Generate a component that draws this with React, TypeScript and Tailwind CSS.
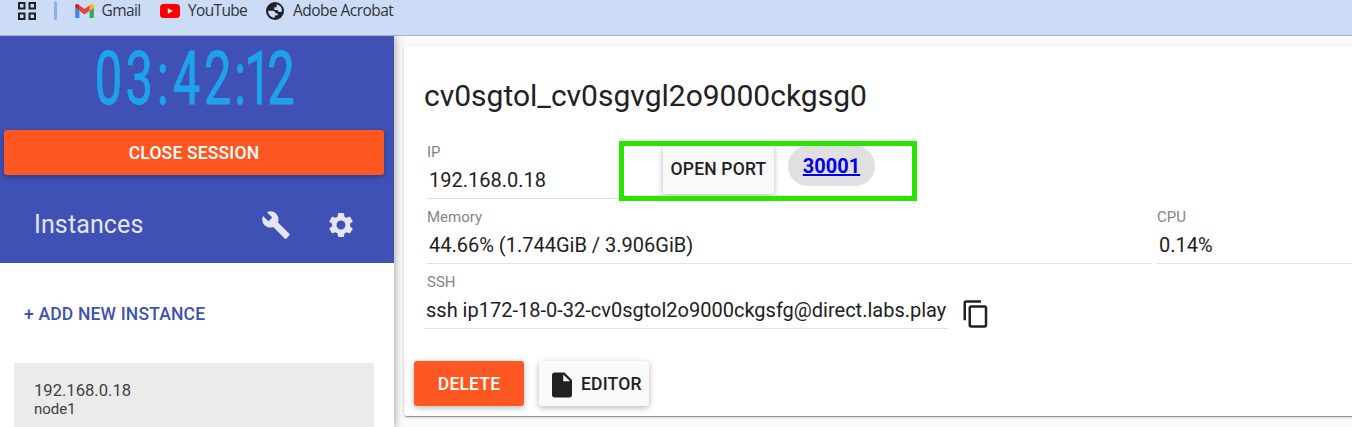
import React from "react";
import { MdBuild, MdContentCopy, MdInsertDriveFile, MdSettings } from "react-icons/md";

const RAISED = "shadow-[0_2px_6px_rgba(0,0,0,0.28)]";

function AppsIcon() {
  return (
    <svg width="18" height="18" viewBox="0 0 18 18" fill="none" stroke="#202124" strokeWidth="2">
      <rect x="1" y="1" width="5.5" height="5.5" />
      <rect x="11.5" y="1" width="5.5" height="5.5" />
      <rect x="1" y="11.5" width="5.5" height="5.5" />
      <rect x="11.5" y="11.5" width="5.5" height="5.5" />
    </svg>
  );
}

function GmailIcon() {
  return (
    <svg width="19" height="14" viewBox="52 42 88 66">
      <path fill="#4285f4" d="M58 108h14V74L52 59v43c0 3.32 2.69 6 6 6" />
      <path fill="#34a853" d="M120 108h14c3.32 0 6-2.69 6-6V59l-20 15" />
      <path fill="#fbbc04" d="M120 48v26l20-15v-8c0-7.42-8.47-11.65-14.4-7.2" />
      <path fill="#ea4335" d="M72 74V48l24 18 24-18v26L96 92" />
      <path fill="#c5221f" d="M52 51v8l20 15V48l-5.6-4.2c-5.94-4.45-14.4-.22-14.4 7.2" />
    </svg>
  );
}

function YouTubeIcon() {
  return (
    <svg width="20" height="14" viewBox="0 0 20 14">
      <rect width="20" height="14" rx="3.5" fill="#ff0000" />
      <path d="M7.8 4.2v5.6l5-2.8z" fill="#fff" />
    </svg>
  );
}

function GlobeIcon() {
  return (
    <svg width="18" height="18" viewBox="0 0 18 18">
      <circle cx="9" cy="9" r="9" fill="#202124" />
      <path
        fill="#ccdcf6"
        d="M2 8.7h4.6c1.7 0 3 1 3 2.6h2v2.2H8.8v2.3A7 7 0 0 1 2 8.7zM10.6 2.2A7 7 0 0 1 16 9c-.5.8-1.3 1-2.2 1-1.3 0-2-.8-2-2H8.3V5.2h2.3z"
      />
    </svg>
  );
}

function Bookmarks() {
  return (
    <header className="flex h-9 shrink-0 items-start border-b border-[#a3b2cf] bg-[#ccdcf6] font-['Open_Sans','Noto_Sans',sans-serif] text-[15.5px] leading-[20px] text-[#30343b]">
      <div className="ml-[17.5px] mt-[2px]"><AppsIcon /></div>
      <div className="ml-[18px] mt-[1px] h-[19px] w-[3px] rounded-full bg-[#8ab2ee]" />
      <div className="ml-[18px] mt-[4px]"><GmailIcon /></div>
      <span className="ml-[8px] w-[40px] whitespace-nowrap tracking-[-0.6px]">Gmail</span>
      <div className="ml-[18.5px] mt-[4px]"><YouTubeIcon /></div>
      <span className="ml-[8px] w-[58px] whitespace-nowrap tracking-[-0.65px]">YouTube</span>
      <div className="ml-[20px] mt-[2px]"><GlobeIcon /></div>
      <span className="ml-[9px] whitespace-nowrap tracking-[-0.55px]">Adobe Acrobat</span>
    </header>
  );
}

function Digit({ char, className }: { char: string; className: string }) {
  return <span className={`shrink-0 text-center ${className}`}>{char}</span>;
}

function Clock() {
  return (
    <div className="h-[94px] pl-[93px] pt-[6px]">
      <div className="flex w-[310px] origin-left scale-x-[0.66] font-['Roboto',sans-serif] text-[74px] leading-[74px] text-[#1fa2ec] [-webkit-text-stroke:1px_#1fa2ec]">
        <Digit char="0" className="w-[47px]" />
        <Digit char="3" className="w-[46px]" />
        <Digit char=":" className="w-[25px]" />
        <Digit char="4" className="w-[47px]" />
        <Digit char="2" className="w-[48px]" />
        <Digit char=":" className="w-[20px]" />
        <Digit char="1" className="-ml-[4px] w-[42px]" />
        <Digit char="2" className="-ml-[7px] w-[42px]" />
      </div>
    </div>
  );
}

function Sidebar() {
  return (
    <aside className="z-10 flex w-[394px] shrink-0 flex-col bg-white shadow-[1px_0_8px_rgba(0,0,0,0.35)]">
      <div className="flex h-[227px] shrink-0 flex-col bg-[#3f51b5]">
        <Clock />
        <button className={`ml-1 flex h-[45px] w-[380px] shrink-0 items-center justify-center rounded-[3px] bg-[#ff5722] pt-[2px] text-[17.5px] font-medium tracking-[0.175px] text-white ${RAISED}`}>
          CLOSE SESSION
        </button>
        <div className="flex pt-[34px] text-[#e4e6f5]">
          <h2 className="ml-[34px] w-[227px] pt-px text-[25px] leading-[30px] tracking-[0.125px]">Instances</h2>
          <MdBuild size={30} className="mt-px" />
          <MdSettings size={30} className="ml-[35px] mt-px" />
        </div>
      </div>
      <button className="ml-6 mt-[39px] h-[24px] shrink-0 whitespace-nowrap text-left text-[17.5px] font-medium leading-[24px] tracking-[0.175px] text-[#3f51b5]">
        + ADD NEW INSTANCE
      </button>
      <div className="ml-[14px] mt-[37px] h-[70px] w-[360px] shrink-0 bg-[#ebebeb] pl-5 pt-[19px] text-[#404040]">
        <div className="text-[16.6px] leading-[18px]">192.168.0.18</div>
        <div className="text-[15px] leading-[19px]">node1</div>
      </div>
    </aside>
  );
}

function Field({ label, value, className, inset }: { label: string; value: string; className: string; inset: string }) {
  return (
    <div className={`h-[65px] shrink-0 overflow-hidden whitespace-nowrap border-b border-[#e0e0e0] pt-[9px] ${className}`}>
      <div className={`text-[15px] leading-[18px] text-[#858585] ${inset}`}>{label}</div>
      <div className="mt-[7px] pl-[2px] text-[20px] leading-[25px] text-[#212121]">{value}</div>
    </div>
  );
}

function InstanceCard() {
  return (
    <section className="relative ml-[10px] mt-[10px] h-[370px] w-[1000px] shrink-0 rounded-[3px] bg-white shadow-[0_1px_3px_rgba(0,0,0,0.25),0_2px_1px_-1px_rgba(0,0,0,0.3)]">
      <h1 className="ml-5 h-[88px] pt-[32px] text-[30px] leading-[36px] text-[#212121]">cv0sgtol_cv0sgvgl2o9000ckgsg0</h1>
      <div className="flex pl-[23px]">
        <Field label="IP" value="192.168.0.18" className="w-[220px]" inset="pl-0" />
        <button className={`ml-[16px] mt-[10px] h-[50px] w-[111px] whitespace-nowrap rounded-[3px] bg-[#fafafa] text-[17.5px] font-medium tracking-[0.175px] text-[#212121] ${RAISED}`}>
          OPEN PORT
        </button>
        <div className="ml-[14px] mt-[12px] flex h-[40px] w-[87px] items-center justify-center rounded-full bg-[#e0e0e0]">
          <a href="#30001" className="text-[20px] font-bold text-[#0000ee] underline">30001</a>
        </div>
      </div>
      <div className="flex pl-[23px]">
        <Field label="Memory" value="44.66% (1.744GiB / 3.906GiB)" className="w-[725px]" inset="pl-0" />
        <Field label="CPU" value="0.14%" className="ml-[5px] w-[247px]" inset="pl-0" />
      </div>
      <div className="flex pl-5">
        <Field
          label="SSH"
          value="ssh ip172-18-0-32-cv0sgtol2o9000ckgsfg@direct.labs.play"
          className="w-[524px]"
          inset="pl-[3px]"
        />
        <MdContentCopy size={30} className="ml-[12.5px] mt-[35px] text-[#212121]" />
      </div>
      <div className="ml-[10px] mt-[32px] flex gap-[15px] text-[17.5px] font-medium tracking-[0.175px]">
        <button className={`h-[45px] w-[110px] rounded-[3px] bg-[#ff5722] pt-[2px] text-white ${RAISED}`}>DELETE</button>
        <button className={`flex h-[45px] w-[110px] items-center gap-[4.5px] rounded-[3px] bg-[#fafafa] pl-[7.5px] pt-[2px] text-[#212121] ${RAISED}`}>
          <MdInsertDriveFile size={30} />
          EDITOR
        </button>
      </div>
      <div className="pointer-events-none absolute left-[215px] top-[95px] h-[60px] w-[298px] border-[5px] border-[#29e600]" />
    </section>
  );
}

export default function App() {
  return (
    <div className="flex h-[427px] w-[1352px] flex-col overflow-hidden bg-[#fafafa] font-['Roboto',sans-serif]">
      <Bookmarks />
      <main className="flex min-h-0 flex-1 overflow-hidden">
        <Sidebar />
        <InstanceCard />
      </main>
    </div>
  );
}
